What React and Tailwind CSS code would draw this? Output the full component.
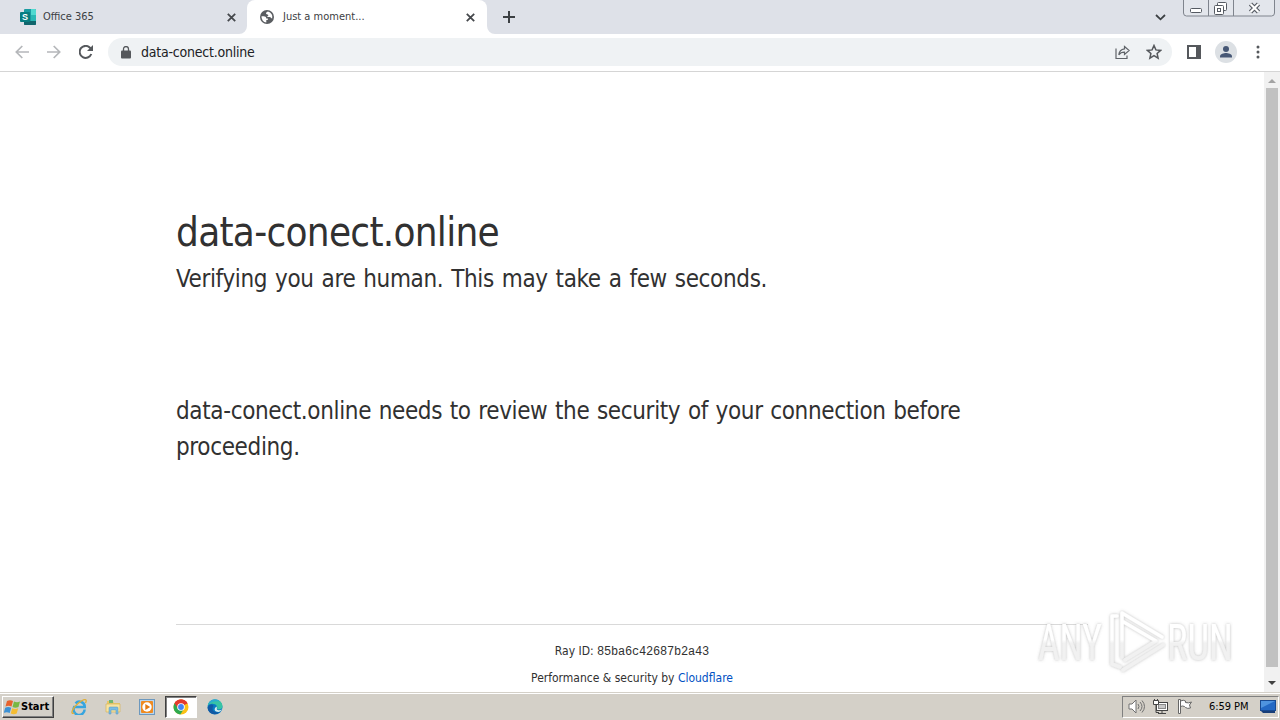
import React from "react";

const Close = () => (
  <svg width="9" height="9" viewBox="0 0 9 9" stroke="#45484c" strokeWidth="1.8">
    <path d="M.8.8l7.4 7.4M8.2.8L.8 8.2" />
  </svg>
);

const SharepointIcon = () => (
  <svg width="16" height="16" viewBox="0 0 16 16">
    <rect x="4" width="12" height="16" rx="1" fill="#1a9ba1" />
    <path d="M11 0h4a1 1 0 011 1v5h-5z" fill="#50d9d0" />
    <path d="M11 6h5v6h-5z" fill="#29b8b4" />
    <path d="M4 12h12v3a1 1 0 01-1 1H5a1 1 0 01-1-1z" fill="#10656c" />
    <rect y="3" width="10" height="10" rx="1" fill="#087d80" />
    <text x="5" y="11.2" textAnchor="middle" fontSize="9" fontWeight="bold" fill="#fff" fontFamily="Liberation Sans, sans-serif">S</text>
  </svg>
);

const GlobeIcon = () => (
  <svg width="14" height="14" viewBox="0 0 14 14">
    <circle cx="7" cy="7" r="7" fill="#5a5d61" />
    <path d="M8 1.600C6.200 2.200 5.600 3.200 6.300 4.100c.6.7 1.900.4 2 1.300.1.800-1.300.8-1.500 1.600h3c1 .1 1.200 1.400 2.400 1.600A5.500 5.500 0 008 1.600zM1.500 6.300h2.200c1.500 0 2.600.8 2.600 2.100h1.500v1.500H6.300v2.600A5.600 5.600 0 011.500 6.300z" fill="#fff" />
  </svg>
);

const Tabs = () => (
  <div className="flex h-[34px] bg-[#dee1e8]">
    <div className="flex h-[34px] w-[247px] shrink-0 items-center pr-[11px] pl-5 text-[#3c4043]">
      <SharepointIcon />
      <span className="ml-[7px] flex-1 text-[11px] whitespace-nowrap">Office 365</span>
      <Close />
    </div>
    <div className="relative flex h-[34px] w-[240px] shrink-0 items-center rounded-t-[8px] bg-white pr-[12px] pl-[13px] text-[#3c4043]">
      <svg className="absolute bottom-0 left-[-8px]" width="8" height="8"><path d="M8 0v8H0a8 8 0 008-8" fill="#fff" /></svg>
      <svg className="absolute right-[-8px] bottom-0" width="8" height="8"><path d="M0 0v8h8a8 8 0 01-8-8" fill="#fff" /></svg>
      <GlobeIcon />
      <span className="ml-[9px] flex-1 text-[11px] whitespace-nowrap">Just a moment...</span>
      <Close />
    </div>
    <div className="flex flex-1 items-center pl-4">
      <svg width="12" height="12" viewBox="0 0 12 12" stroke="#3c4043" strokeWidth="2"><path d="M6 0v12M0 6h12" /></svg>
    </div>
    <div className="flex w-[125px] items-start">
      <svg className="mt-[14px]" width="11" height="7" viewBox="0 0 11 7" fill="none" stroke="#3c4043" strokeWidth="1.8"><path d="M1 1l4.5 4.3L10 1" /></svg>
      <svg className="ml-[16px] shrink-0" width="94" height="18" viewBox="0 0 94 18" fill="none" stroke="#7f848d">
        <path d="M1.500 0v13a3 3 0 003 3h85a3 3 0 003-3V0M26.500 0v16M51.500 0v16" fill="#e3e6ec" />
        <g stroke="#555a62">
          <rect x="8.500" y="8.500" width="11" height="4" rx="1" fill="#fff" />
          <rect x="35.500" y="2.500" width="9" height="8" rx="1" fill="#fff" />
          <rect x="32.500" y="5.500" width="9" height="9" rx="1" fill="#fff" />
          <rect x="35.500" y="8.500" width="3" height="3" />
        </g>
        <path d="M68.500 4l8 8M76.500 4l-8 8" stroke="#555a62" strokeWidth="4.500" />
        <path d="M68.500 4l8 8M76.500 4l-8 8" stroke="#fff" strokeWidth="2.200" />
      </svg>
    </div>
  </div>
);

const Arrow = ({ flip }) => (
  <svg className={flip ? "rotate-180" : ""} width="14" height="14" viewBox="0 0 14 14" fill="none" stroke="#b5b7ba" strokeWidth="1.700"><path d="M14 7H1.500M7.300 1L1.300 7l6 6" /></svg>
);

const Toolbar = () => (
  <div className="flex h-[38px] items-center border-b border-[#d5d5d5] bg-white pb-[1px] pl-[15px]">
    <Arrow />
    <span className="ml-[18px] flex"><Arrow flip /></span>
    <svg className="ml-[18px]" width="14" height="14" viewBox="0 0 14 14" fill="none" stroke="#55585c" strokeWidth="2"><path d="M12.300 9A6 6 0 1111 2.700L12.800 4.500" /><path d="M14 0v6H8z" fill="#55585c" stroke="none" /></svg>
    <div className="ml-[15px] flex h-7 w-[1064px] items-center rounded-full bg-[#eff2f4] pr-[10px] pl-[13px]">
      <svg width="10" height="13" viewBox="0 0 10 13"><rect y="4.500" width="10" height="8" rx="1" fill="#55585c" /><path d="M2.500 5V3a2.500 2.500 0 015 0v2" fill="none" stroke="#55585c" strokeWidth="1.300" /></svg>
      <span className="ml-[10px] flex-1 text-[14px] tracking-[-0.22px] text-[#202124]">data-conect.online</span>
      <svg width="15" height="15" viewBox="0 0 15 15" fill="none" stroke="#5f6368" strokeWidth="1.200"><path d="M1 3.500v10h11v-3" /><path d="M9.500 1.500l4.700 4-4.700 4V7.200c-2.800 0-4.500.9-5.700 2.700.3-3 2.200-5.500 5.700-6z" /></svg>
      <svg className="ml-4" width="16" height="16" viewBox="0 0 16 16" fill="none" stroke="#55585c" strokeWidth="1.500"><path d="M8 1.500l1.900 4.400 4.700.5-3.500 3.100 1 4.700L8 11.700l-4.100 2.500 1-4.700-3.500-3.100 4.700-.5z" /></svg>
    </div>
    <svg className="ml-[15px]" width="14" height="14" viewBox="0 0 14 14"><rect x="1" y="1" width="12" height="12" fill="none" stroke="#55585c" strokeWidth="2" /><path d="M9 0h5v14H9z" fill="#55585c" /></svg>
    <svg className="ml-[14px]" width="22" height="22" viewBox="0 0 22 22"><circle cx="11" cy="11" r="11" fill="#dce0e4" /><circle cx="11" cy="8" r="3" fill="#465775" /><path d="M5 16.500v-1.300C5 13 9 12 11 12s6 1 6 3.200v1.300z" fill="#465775" /></svg>
    <svg className="ml-[19px]" width="4" height="14" viewBox="0 0 4 14" fill="#55585c"><circle cx="2" cy="2" r="1.500" /><circle cx="2" cy="7" r="1.500" /><circle cx="2" cy="12" r="1.500" /></svg>
  </div>
);

const Watermark = () => (
  <svg className="absolute top-[531px] left-[1030px] overflow-visible" width="220" height="80" viewBox="0 0 220 80">
    <defs>
      <linearGradient id="fade" x1="0" y1="0" x2="0" y2="76" gradientUnits="userSpaceOnUse">
        <stop offset=".48" stopColor="#fff" /><stop offset=".53" stopColor="#f1f1f1" />
      </linearGradient>
      <filter id="glow" x="-10%" y="-20%" width="120%" height="140%"><feDropShadow dx="0" dy="0" stdDeviation="1.800" floodColor="#777" floodOpacity=".5" /></filter>
    </defs>
    <g filter="url(#glow)" fontFamily="Roboto, Liberation Sans, sans-serif" fontSize="50" fill="url(#fade)">
      <text x="8" y="57" textLength="64" lengthAdjust="spacingAndGlyphs">ANY</text>
      <text x="137" y="57" textLength="66" lengthAdjust="spacingAndGlyphs">RUN</text>
      <g fill="none" stroke="url(#fade)" strokeWidth="3.500" strokeLinejoin="round" strokeLinecap="round">
        <path d="M92 54V10l40 24M92 18l34 20-31 19M87 13h-5v48l8 3M93 67l40-25" />
      </g>
    </g>
  </svg>
);

const Page = () => (
  <div className="relative flex h-[620px] bg-white">
    <main className="flex w-[1264px] flex-col pt-[136px] pl-[176px] text-[#313131]">
      <h1 className="h-[48px] text-[40px] leading-[48px] tracking-[-0.72px]">data-conect.online</h1>
      <p className="mt-[5px] text-[24px] leading-[36px] tracking-[-0.36px] [word-spacing:1.4px]">Verifying you are human. This may take a few seconds.</p>
      <p className="mt-[96px] w-[912px] text-[24px] leading-[36px] tracking-[-0.36px] [word-spacing:1.1px]">data-conect.online needs to review the security of your connection before<br />proceeding.</p>
      <footer className="mt-[159px] w-[912px] border-t border-[#d9d9d9] pt-[17px] text-center text-[12px] leading-[18px]">
        <div>Ray ID: <code className="font-['Liberation_Mono',monospace] text-[12px] tracking-[-0.2px]">85ba6c42687b2a43</code></div>
        <div className="mt-[8px]">Performance &amp; security by <span className="text-[#0051c3]">Cloudflare</span></div>
      </footer>
    </main>
    <div className="flex w-4 flex-col items-center bg-[#f1f1f1]">
      <svg width="16" height="16" viewBox="0 0 16 16"><path d="M4 11h8L8 7z" fill="#a3a3a3" /></svg>
      <div className="h-[579px] w-[12px] bg-[#c1c1c1]" />
      <svg className="mt-auto" width="16" height="16" viewBox="0 0 16 16"><path d="M4 5h8L8 9z" fill="#404040" /></svg>
    </div>
    <Watermark />
  </div>
);

const WindowsFlag = () => (
  <svg className="shrink-0" width="17" height="16" viewBox="0 0 17 16">
    <path d="M3 2c2-1 4-1 6 0L7.500 7.500c-2-1-4-1-6 0z" fill="#e8622c" /><path d="M10 2.500c2 1 4 1 6 0L14.500 8c-2 1-4 1-6 0z" fill="#78b843" />
    <path d="M1.200 8.700c2-1 4-1 6 0L5.700 14c-2-1-4-1-6 0z" fill="#3d91d4" /><path d="M8.200 9.200c2 1 4 1 6 0l-1.500 5.300c-2 1-4 1-6 0z" fill="#f5bd32" />
  </svg>
);

const IEIcon = () => (
  <svg width="17" height="17" viewBox="0 0 17 17" fill="none"><path d="M13.600 11.500A5.500 5.500 0 113.200 9h10.600A5.400 5.400 0 004.500 5.300" stroke="#37a5df" strokeWidth="2.500" /><path d="M3.500 15C-1.500 17 1.500 10 7 5.500S17 0 14.500 5" stroke="#dfae38" strokeWidth="1.300" /></svg>
);

const FolderIcon = () => (
  <svg width="17" height="16" viewBox="0 0 17 16"><path d="M2 2h6l1 2h6v9H2z" fill="#e9c768" /><path d="M4 1h4v3H4z" fill="#71b66f" /><path d="M1 5h14v8H1z" fill="#f7e3a1" stroke="#d6b45b" strokeWidth=".7" /><path d="M4 15V9q0-1 1-1h7q1 0 1 1v6h-2v-4H6v4z" fill="#79bce3" stroke="#5795bd" strokeWidth=".5" /></svg>
);

const MediaIcon = () => (
  <svg width="16" height="16" viewBox="0 0 16 16"><rect x=".5" y=".5" width="15" height="15" fill="#b9d6f0" stroke="#6c98be" /><rect x="2" y="2" width="12" height="12" rx="1" fill="#ef8b22" /><circle cx="8" cy="8" r="4.700" fill="#fff" /><path d="M6.300 4.900v6.200L11.200 8z" fill="#e37a13" /></svg>
);

const ChromeIcon = () => (
  <svg width="16" height="16" viewBox="0 0 16 16"><circle cx="8" cy="8" r="7.500" fill="#fbc116" /><path d="M8 8L1.500 4.250A7.500 7.500 0 0114.500 4.250z" fill="#e33b2e" /><path d="M1.500 4.250A7.500 7.500 0 007.300 15.470L11 9.800 8 8z" fill="#2da94f" /><path d="M8 4.500h6.600A7.500 7.500 0 001.500 4.250L5 9.500z" fill="#e33b2e" /><circle cx="8" cy="8" r="3.800" fill="#fff" /><circle cx="8" cy="8" r="2.900" fill="#4285f4" /></svg>
);

const EdgeIcon = () => (
  <svg width="16" height="16" viewBox="0 0 16 16"><circle cx="8" cy="8" r="7.500" fill="#087ac2" /><path d="M.7 7C1.500-1 15-1.500 15.500 7.300c.2 3-3.500 4-5.600 2.800C11 8 9.500 5 6.500 5 3.500 4.500 1.500 5.500.7 7z" fill="#37c4a5" /><path d="M1 5.500C3-.5 10-1 13 2.500 9 1.500 4 2.500 1 5.500z" fill="#2badd0" /><path d="M6.500 7c-3 4 1 7.500 6 6C9 17 1 15.500.6 8.500 2 5 6 4.500 6.500 7z" fill="#1159a4" /><path d="M9.500 7.500c1.200 2-.8 2.500 1.300 3.500 1.500.5 3 0 4-.7-1 1.800-2 2.500-3.500 2.700C8 13 6 10 9.500 7.500z" fill="#d7ecee" /></svg>
);

const Taskbar = () => (
  <div className="flex h-7 items-center border-t border-[#d4d0c8] bg-[#d4d0c8] shadow-[inset_0_1px_0_#fff]">
    <div className="ml-[2px] flex h-[22px] w-[52px] items-center border border-t-white border-r-[#404040] border-b-[#404040] border-l-white pl-[1px] shadow-[inset_-1px_-1px_0_#808080]">
      <WindowsFlag /><span className="pt-[2px] text-[11px] font-bold text-black">Start</span>
    </div>
    <span className="ml-[17px]"><IEIcon /></span>
    <span className="ml-[17px]"><FolderIcon /></span>
    <span className="ml-[17px]"><MediaIcon /></span>
    <div className="ml-[10px] flex h-[22px] w-[32px] items-center justify-center border border-t-[#404040] border-r-white border-b-white border-l-[#404040] bg-white shadow-[inset_1px_1px_0_#808080]"><ChromeIcon /></div>
    <span className="ml-[10px]"><EdgeIcon /></span>
    <div className="mr-[1px] ml-auto flex h-[22px] w-[157px] items-center border border-t-[#808080] border-r-white border-b-white border-l-[#808080] pl-[5px]">
      <svg width="17" height="15" viewBox="0 0 17 15" fill="none" stroke="#707070"><path d="M1 5h3l4-4v13l-4-4H1z" fill="#fff" /><path d="M10 5q2 2.500 0 5M12 3q4 4.500 0 9M14 1.500q5 6 0 12" /></svg>
      <svg className="ml-[7px]" width="17" height="16" viewBox="0 0 17 16" fill="none" stroke="#444"><rect x="4.500" y="3.500" width="11" height="8" fill="#fff" /><rect x="6.500" y="5.500" width="7" height="4" fill="#c8c8c8" stroke="#888" /><path d="M6 14.500h8M10 12v2" /><path d="M1.500 1.500h5v4h-5z" fill="#fff" /><path d="M4 5.500v8h3M2.500 0v2M5.500 0v2" /></svg>
      <svg className="ml-[8px]" width="16" height="15" viewBox="0 0 16 15" stroke="#666" fill="#fff"><path d="M1.500.5v14h2v-14zM3.500 2q3-1.500 5 0v1.500q3 1 6-.5l-2 3 1 3q-3 1-5-.5l-1-1q-2-1-4 0z" /></svg>
      <span className="ml-[16px] w-[42px] pt-[2px] text-[11px] tracking-[-0.05px] whitespace-nowrap text-black">6:59 PM</span>
      <svg className="ml-[9px]" width="16" height="13" viewBox="0 0 16 13"><rect x=".5" y=".5" width="15" height="10" fill="#2469c4" stroke="#184a92" /><path d="M1 1h14L1 8z" fill="#4f94df" /><path d="M1 11h14v2H3z" fill="#183e78" /></svg>
    </div>
  </div>
);

export default function App() {
  return (
    <div className="h-[720px] w-[1280px] overflow-hidden bg-white font-['DejaVu_Sans_Condensed','DejaVu_Sans',sans-serif] [font-stretch:condensed]">
      <Tabs />
      <Toolbar />
      <Page />
      <Taskbar />
    </div>
  );
}
